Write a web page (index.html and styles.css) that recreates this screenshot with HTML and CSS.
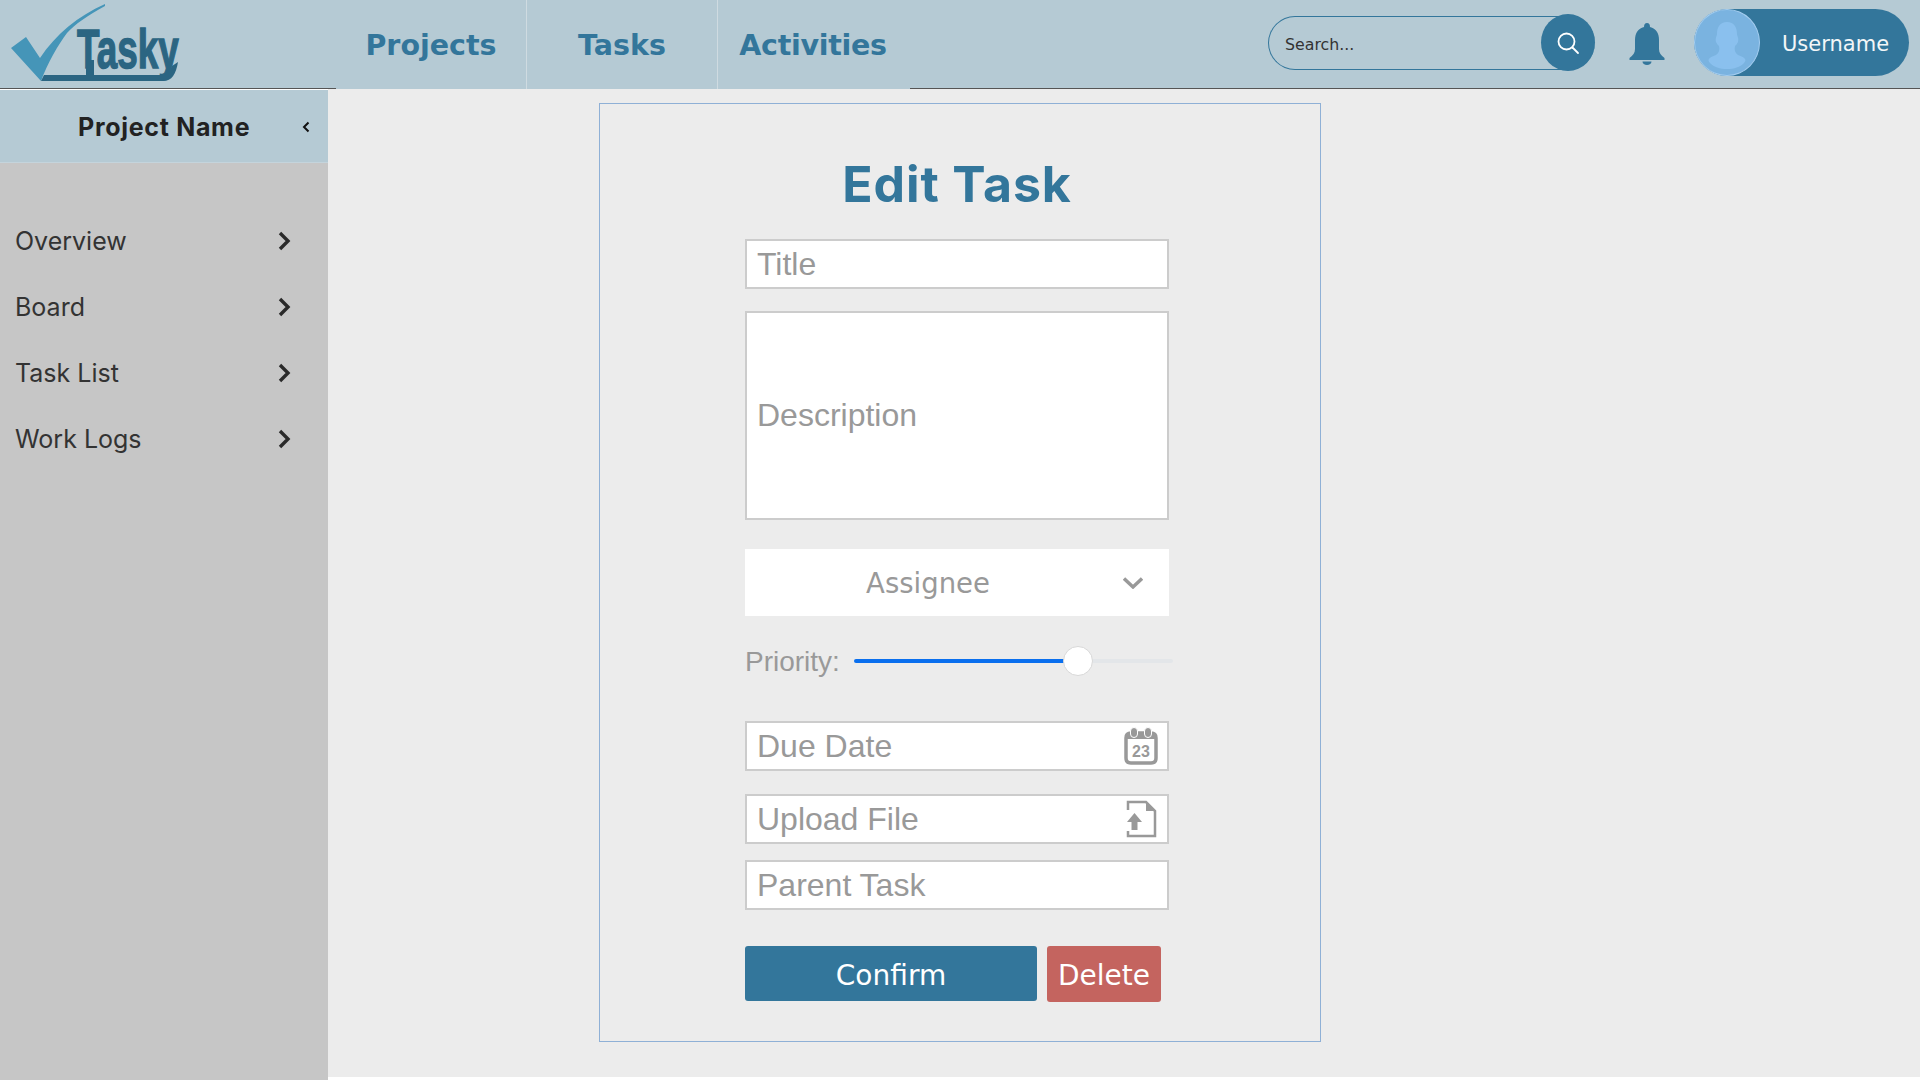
FILE: index.html
```html
<!DOCTYPE html>
<html>
  <head>
    <meta http-equiv="Content-Type" content="text/html; charset=UTF-8"/>
    <title>Tasky - Edit Task</title>
    <link rel="stylesheet" href="styles.css">
  </head>
  <body>
    <header class="topbar">
      <a class="logo" href="#">
        <svg width="190" height="88" viewBox="0 0 190 88">
          <path fill="#4595b8" d="M11 48 L26 37 L40 58 C56 34 78 16 105 4 L105 6 C88 15 74 25 67 33 C58 45 48 62 41 81 Z"/>
          <path fill="#2b6582" d="M41 81 L44 75 L162 75 C168 75 170 72 172 66 L178 62 C176 74 172 81 163 81 Z"/>
          <text class="logoText" transform="translate(77 68) scale(0.67 1)">Tasky</text>
          <rect x="86" y="60" width="8" height="16" fill="#2b6582"/>
        </svg>
      </a>
      <nav class="tabs">
        <a class="tab" href="#">Projects</a>
        <a class="tab" href="#">Tasks</a>
        <a class="tab" href="#">Activities</a>
      </nav>
      <div class="topRight">
        <div class="search">
          <input class="searchInput" type="text" placeholder="Search...">
          <button class="searchButton" type="button">
            <svg width="24" height="24" viewBox="0 0 24 24" fill="none" stroke="#fff" stroke-width="1.8">
              <circle cx="10.5" cy="10.5" r="8"/>
              <path d="M16.5 16.5 L22 22" stroke-linecap="round"/>
            </svg>
          </button>
        </div>
        <svg class="bell" width="36" height="42" viewBox="0 0 36 42">
          <path fill="#33769b" d="M18 0 C20 0 21 1.500 21 4 C27 5.500 30 10 30 17 L30 26 C30 30 32 32 35.500 35 L35.500 37 L0.500 37 L0.500 35 C4 32 6 30 6 26 L6 17 C6 10 9 5.500 15 4 C15 1.500 16 0 18 0 Z"/>
          <path fill="#33769b" d="M13.500 38.500 L22.500 38.500 C22.500 40.500 20.500 42 18 42 C15.500 42 13.500 40.500 13.500 38.500 Z"/>
        </svg>
        <div class="user">
          <div class="avatar">
            <svg width="66" height="67" viewBox="0 0 66 67">
              <path fill="#8ac0ee" d="M33 13 C40 13 43 18 43 25 C43 27 45 29 44 33 C43 35 42 36 41 37 C40 41 41 44 44 46 C49 48 54 50 50 54 C46 58 40 60 33 60 C26 60 20 58 16 54 C12 50 17 48 22 46 C25 44 26 41 25 37 C24 36 23 35 22 33 C21 29 23 27 23 25 C23 18 26 13 33 13 Z"/>
            </svg>
          </div>
          <span class="userName">Username</span>
        </div>
      </div>
    </header>

    <div class="page">
      <aside class="sidebar">
        <div class="sidebarHead">
          <span class="projectName">Project Name</span>
          <svg class="collapse" width="8" height="12" viewBox="0 0 8 12" fill="none" stroke="#111" stroke-width="2">
            <path d="M6.500 1.500 L2 6 L6.500 10.500"/>
          </svg>
        </div>
        <ul class="sideMenu">
          <li class="sideItem">Overview<svg width="13" height="20" viewBox="0 0 13 20" fill="none" stroke="#2a2a2a" stroke-width="3.400"><path d="M2 2 L10 10 L2 18"/></svg></li>
          <li class="sideItem">Board<svg width="13" height="20" viewBox="0 0 13 20" fill="none" stroke="#2a2a2a" stroke-width="3.400"><path d="M2 2 L10 10 L2 18"/></svg></li>
          <li class="sideItem">Task List<svg width="13" height="20" viewBox="0 0 13 20" fill="none" stroke="#2a2a2a" stroke-width="3.400"><path d="M2 2 L10 10 L2 18"/></svg></li>
          <li class="sideItem">Work Logs<svg width="13" height="20" viewBox="0 0 13 20" fill="none" stroke="#2a2a2a" stroke-width="3.400"><path d="M2 2 L10 10 L2 18"/></svg></li>
        </ul>
      </aside>

      <main class="main">
        <form class="card">
          <h1 class="cardTitle">Edit Task</h1>
          <input class="field titleField" type="text" placeholder="Title">
          <textarea class="field descField" placeholder="Description"></textarea>
          <div class="assignee">
            <span class="assigneeText">Assignee</span>
            <svg width="20" height="12" viewBox="0 0 20 12" fill="none" stroke="#999" stroke-width="3.400"><path d="M1 1.500 L10 10 L19 1.500"/></svg>
          </div>
          <div class="priority">
            <label class="priorityLabel" for="priorityRange">Priority:</label>
            <input class="priorityRange" id="priorityRange" type="range" min="0" max="100" step="0.1" value="72.3">
          </div>
          <div class="field iconField dueField">
            <input class="iconInput" type="text" placeholder="Due Date">
            <svg width="34" height="38" viewBox="0 0 34 38">
              <path fill="none" stroke="#999" stroke-width="3.500" d="M8 6 L7 6 Q2 6 2 11 L2 31 Q2 36 7 36 L27 36 Q32 36 32 31 L32 11 Q32 6 27 6 L26 6 M14 6 L20 6"/>
              <rect x="2" y="6" width="30" height="6" fill="#999"/>
              <rect x="6.500" y="0.500" width="7" height="10" rx="3.500" fill="#999" stroke="#fff" stroke-width="1"/>
              <rect x="20.500" y="0.500" width="7" height="10" rx="3.500" fill="#999" stroke="#fff" stroke-width="1"/>
              <text class="calendarDay" x="17" y="30" text-anchor="middle">23</text>
            </svg>
          </div>
          <div class="field iconField uploadField">
            <input class="iconInput" type="text" placeholder="Upload File">
            <svg width="31" height="38" viewBox="0 0 31 38">
              <path fill="none" stroke="#999" stroke-width="2.500" d="M2 10 L2 2 L20 2 L29 11 L29 36 L2 36 L2 31"/>
              <path fill="#999" d="M20 2 L20 11 L29 11 Z"/>
              <path fill="#999" d="M8.500 13 L16 22 L11.500 22 L11.500 30 L5.500 30 L5.500 22 L1 22 Z"/>
            </svg>
          </div>
          <input class="field parentField" type="text" placeholder="Parent Task">
          <div class="actions">
            <button class="btn btnConfirm" type="button">Confirm</button>
            <button class="btn btnDelete" type="button">Delete</button>
          </div>
        </form>
      </main>
    </div>
  </body>
</html>
```

FILE: styles.css
```css
html {
  font-family: "DejaVu Sans", sans-serif;
  width: 100%;
  height: 100%;
  margin: 0;
  padding: 0;
  overflow: hidden;
}
body {
  width: 100%;
  height: 100%;
  margin: 0;
  padding: 0;
  display: flex;
  flex-direction: column;
  background: #fff;
}
* {
  box-sizing: border-box;
}

/* top bar */
.topbar {
  display: flex;
  align-items: stretch;
  flex: none;
  height: 89px;
  background: #b5cad4;
  border-bottom: 1px solid #555;
}
.logo {
  display: block;
  width: 336px;
  flex: none;
}
.logo svg {
  display: block;
}
.logoText {
  font-family: "Liberation Sans", sans-serif;
  font-weight: 700;
  font-size: 55px;
  fill: #2b6582;
  stroke: #2b6582;
  stroke-width: 1.400;
}
.tabs {
  display: flex;
  flex: none;
  height: 89px;
  background: #b5cad4;
}
.tab {
  display: flex;
  align-items: center;
  justify-content: center;
  width: 191px;
  padding-top: 1px;
  border-right: 1px solid #cfdbe1;
  color: #33769b;
  font-size: 28.500px;
  font-weight: 700;
  text-decoration: none;
}
.tab:last-child {
  width: 192px;
  padding-right: 2px;
  border-right: 0;
  letter-spacing: -0.300px;
}
.topRight {
  display: flex;
  align-items: center;
  margin-left: auto;
  padding-right: 11px;
}
.search {
  position: relative;
  display: flex;
  align-items: center;
  width: 327px;
  height: 54px;
  margin-right: 34px;
  margin-bottom: 2px;
  border: 1px solid #33769b;
  border-right: 0;
  border-radius: 27px;
}
.searchInput {
  width: 260px;
  margin-left: 14px;
  margin-top: 2px;
  border: 0;
  background: transparent;
  font-family: "DejaVu Sans", sans-serif;
  font-size: 15.800px;
  outline: none;
}
.searchInput::placeholder {
  color: #333;
  opacity: 1;
}
.searchButton {
  position: absolute;
  top: -3px;
  right: 0;
  display: flex;
  align-items: center;
  justify-content: center;
  width: 54px;
  height: 57px;
  padding: 0;
  border: 0;
  border-radius: 50%;
  background: #33769b;
}
.bell {
  flex: none;
  margin-right: 29px;
}
.user {
  display: flex;
  align-items: center;
  width: 215px;
  height: 67px;
  margin-bottom: 3px;
  border-radius: 34px;
  background: #33769b;
}
.avatar {
  flex: none;
  width: 66px;
  height: 67px;
  border: 1px solid #a4cdf0;
  border-radius: 50%;
  background: #7ab3e0;
  overflow: hidden;
}
.avatar svg {
  display: block;
  margin: -1px;
}
.userName {
  margin-left: 22px;
  margin-top: 2px;
  color: #f2f6f8;
  font-size: 21px;
}

/* sidebar and main */
.page {
  display: flex;
  flex: 1;
  min-height: 0;
}
.sidebar {
  flex: none;
  width: 328px;
  margin-top: 1px;
  background: #c6c6c6;
}
.sidebarHead {
  display: flex;
  align-items: center;
  height: 73px;
  padding-top: 1px;
  padding-left: 78px;
  padding-right: 18px;
  background: #b5cad4;
  border-bottom: 1px solid #c4d4dc;
}
.projectName {
  flex: 1;
  color: #222;
  font-family: Inter, sans-serif;
  font-size: 25px;
  font-weight: 700;
  letter-spacing: 0.700px;
}
.sideMenu {
  margin: 0;
  padding: 45px 0 0;
  list-style: none;
}
.sideItem {
  display: flex;
  align-items: center;
  justify-content: space-between;
  height: 66px;
  padding-left: 15px;
  padding-right: 37px;
  color: #333;
  font-family: Inter, sans-serif;
  font-size: 25px;
}
.main {
  flex: 1;
  margin-bottom: 3px;
  padding-top: 14px;
  padding-left: 271px;
  background: #ececec;
}

/* edit task card */
.card {
  display: flex;
  flex-direction: column;
  width: 722px;
  height: 939px;
  padding: 50px 0 0 145px;
  border: 1px solid #8fb0d6;
}
.cardTitle {
  width: 424px;
  height: 60px;
  margin: 0 0 25px;
  color: #33769b;
  font-family: Inter, sans-serif;
  font-size: 50px;
  font-weight: 700;
  letter-spacing: 0.900px;
  line-height: 60px;
  text-align: center;
}
.field {
  flex: none;
  width: 424px;
  height: 50px;
  padding: 0 10px;
  border: 2px solid #ccc;
  border-radius: 0;
  background: #fff;
  color: #333;
  font-family: "Liberation Sans", sans-serif;
  font-size: 32px;
  outline: none;
}
.field::placeholder,
.iconInput::placeholder {
  color: #999;
  opacity: 1;
}
.descField {
  display: block;
  height: 209px;
  margin-top: 22px;
  padding-top: 84px;
  line-height: 36px;
  resize: none;
}
.assignee {
  display: flex;
  align-items: center;
  flex: none;
  width: 424px;
  height: 67px;
  margin-top: 29px;
  padding-right: 26px;
  background: #fff;
}
.assigneeText {
  flex: 1;
  padding-right: 12px;
  color: #999;
  font-size: 27.500px;
  text-align: center;
}
.priority {
  display: flex;
  align-items: center;
  flex: none;
  width: 428px;
  height: 30px;
  margin-top: 30px;
}
.priorityLabel {
  width: 109px;
  padding-top: 1px;
  color: #999;
  font-family: "Liberation Sans", sans-serif;
  font-size: 28px;
}
.priorityRange {
  width: 319px;
  height: 30px;
  margin: 0;
  background: transparent;
  -webkit-appearance: none;
  appearance: none;
}
.priorityRange::-webkit-slider-runnable-track {
  height: 4px;
  border-radius: 2px;
  background: linear-gradient(to right, #0a6fee 224px, #e3e6e9 224px);
}
.priorityRange::-webkit-slider-thumb {
  width: 30px;
  height: 30px;
  margin-top: -13px;
  border: 1px solid #d8d8d8;
  border-radius: 50%;
  background: #fff;
  -webkit-appearance: none;
  appearance: none;
}
.iconField {
  display: flex;
  align-items: center;
  padding-right: 9px;
}
.iconInput {
  flex: 1;
  min-width: 0;
  padding: 0;
  border: 0;
  background: transparent;
  font-family: "Liberation Sans", sans-serif;
  font-size: 32px;
  outline: none;
}
.dueField {
  margin-top: 45px;
}
.uploadField {
  margin-top: 23px;
  padding-right: 10px;
}
.parentField {
  margin-top: 16px;
}
.calendarDay {
  fill: #999;
  font-family: "Liberation Sans", sans-serif;
  font-size: 16px;
  font-weight: 700;
}
.actions {
  display: flex;
  align-items: flex-start;
  gap: 10px;
  margin-top: 36px;
}
.btn {
  height: 55px;
  padding: 2px 0 0;
  border: 0;
  border-radius: 3px;
  color: #fff;
  font-family: "DejaVu Sans", sans-serif;
  font-size: 28px;
}
.btnConfirm {
  width: 292px;
  padding-top: 4px;
  background: #33769b;
}
.btnDelete {
  width: 114px;
  height: 56px;
  background: #c4645f;
}
```
